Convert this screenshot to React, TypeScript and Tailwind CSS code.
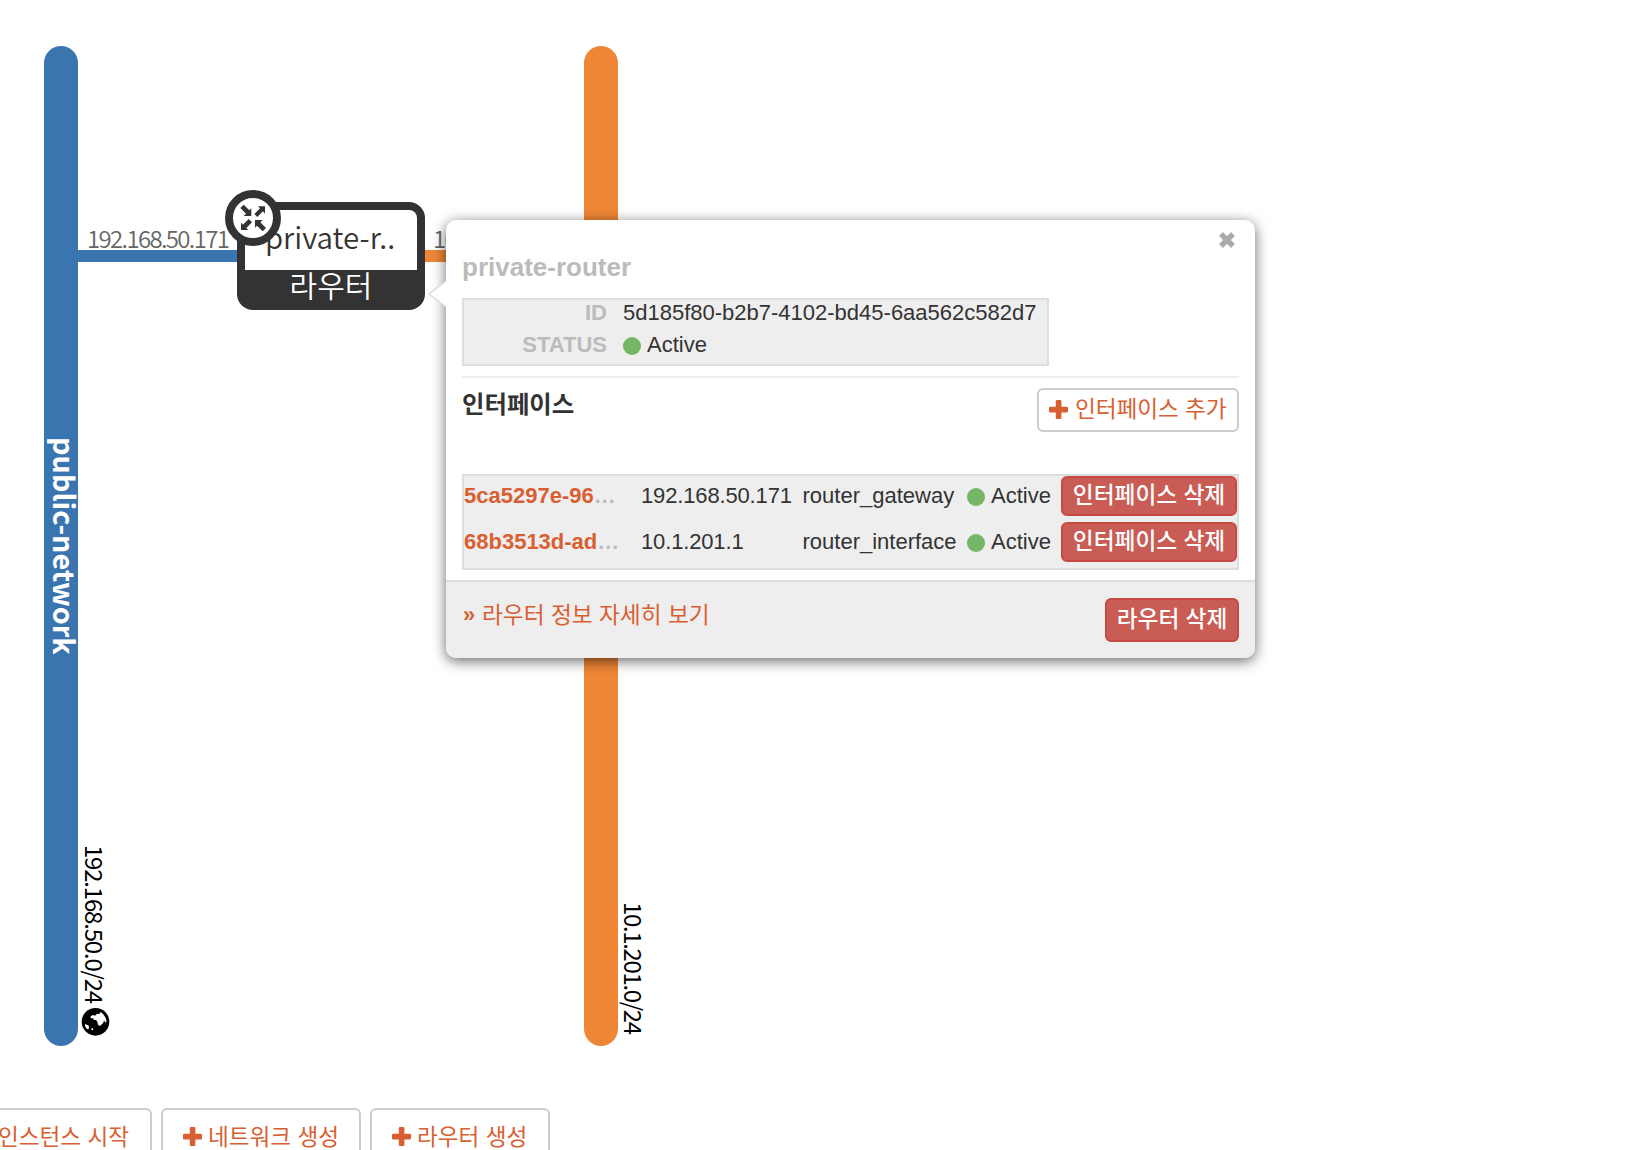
import type { ReactNode } from "react";

const PlusIcon = ({ className = "" }: { className?: string }) => (
  <svg viewBox="0 0 19 19" className={`h-[19px] w-[19px] shrink-0 ${className}`} fill="currentColor">
    <path d="M8 0h3.2a1.2 1.2 0 0 1 1.2 1.2v5.6h5.4A1.2 1.2 0 0 1 19 8v3.2a1.2 1.2 0 0 1-1.2 1.2h-5.4v5.4a1.2 1.2 0 0 1-1.2 1.2H8a1.2 1.2 0 0 1-1.2-1.2v-5.4H1.2A1.2 1.2 0 0 1 0 11.200V8a1.2 1.2 0 0 1 1.200-1.200h5.600V1.200A1.200 1.200 0 0 1 8 0z" />
  </svg>
);

const CloseIcon = () => (
  <svg viewBox="0 0 16 16" className="h-4 w-4" fill="none" stroke="#aaaaaa" strokeWidth="5.400">
    <path d="M2 2l12 12M14 2L2 14" />
  </svg>
);

const RouterIcon = () => (
  <svg viewBox="585 60 168 168" className="absolute left-[225px] top-[190px] h-14 w-14">
    <circle cx="669" cy="144" r="72" fill="#fff" stroke="#333" strokeWidth="24" />
    <g fill="#333">
      <path d="M631 114L641 104L658 121L664 115V138H641L648 131Z" />
      <path d="M705 109V131L699 124L682 141L673 132L690 115L684 109Z" />
      <path d="M633 180V158L639 164L656 147L666 157L649 174L655 180Z" />
      <path d="M675 150H698L691 157L708 174L698 184L681 167L675 173Z" />
    </g>
  </svg>
);

const GlobeIcon = () => (
  <svg viewBox="0 0 108 108" className="absolute left-[78px] top-[1004px] h-9 w-9">
    <circle cx="52.500" cy="53.500" r="41.500" fill="#000" />
    <path
      fill="#fff"
      d="M38 37L45 33L51 35L57 29L64 30L68 24L75 30L82 40L86 52L82 56L78 49L76 56L72 61L65 66L60 62L58 53L54 48L48 48L45 43L38 43ZM21 60L28 63L33 66L32 76L27 75L21 67ZM42 72L47 75L43 79L39 76Z"
    />
  </svg>
);

const Status = () => (
  <span className="flex items-center gap-[6px]">
    <i className="relative top-px h-[18px] w-[18px] shrink-0 rounded-full bg-[#74b566]" />
    Active
  </span>
);

const DangerButton = ({ children, className }: { children: ReactNode; className: string }) => (
  <button
    className={`flex shrink-0 items-center justify-center whitespace-nowrap rounded-[6px] border-2 border-[#c64a41] bg-[#c95c54] pb-[3px] text-[22.700px] font-medium text-white ${className}`}
  >
    {children}
  </button>
);

const interfaces = [
  { id: "5ca5297e-96", ip: "192.168.50.171", type: "router_gateway" },
  { id: "68b3513d-ad", ip: "10.1.201.1", type: "router_interface" },
];

const RouterPopup = () => (
  <section className="absolute left-[446px] top-[220px] flex h-[438px] w-[809px] flex-col rounded-[10px] bg-white text-[22px] leading-8 text-[#333] shadow-[0_3px_14px_rgba(0,0,0,0.6)]">
    <svg viewBox="0 0 19 28" className="absolute -left-[18px] top-[60px] h-7 w-[19px]">
      <path d="M19 0L1 14L19 28Z" fill="#fff" />
      <path d="M18 1L1 14L18 27" fill="none" stroke="#ddd" strokeWidth="1.500" />
    </svg>
    <div className="flex h-6 shrink-0 items-end justify-end px-5 pt-3">
      <span className="relative top-1">
        <CloseIcon />
      </span>
    </div>
    <div className="flex h-[336px] shrink-0 flex-col px-4">
      <h3 className="mt-[7px] h-[47px] text-[26px] font-bold leading-8 text-[#bbb]">private-router</h3>
      <dl className="grid h-[68px] w-[587px] grid-cols-[143px_1fr] content-start gap-x-4 border-2 border-[#ddd] bg-[#eee]">
        <dt className="h-8 text-right font-bold leading-[26px] text-[#bbb]">ID</dt>
        <dd className="h-8 whitespace-nowrap leading-[26px]">5d185f80-b2b7-4102-bd45-6aa562c582d7</dd>
        <dt className="text-right font-bold leading-[26px] text-[#bbb]">STATUS</dt>
        <dd className="leading-[26px]">
          <Status />
        </dd>
      </dl>
      <div className="mt-[10px] flex h-[98px] items-start justify-between border-t-2 border-[#eee]">
        <h4 className="mt-[11px] text-[24.400px] font-bold leading-8">인터페이스</h4>
        <button className="mt-[10px] flex h-11 w-[202px] items-center whitespace-nowrap rounded-[6px] border-2 border-[#ccc] bg-white pb-[2px] pl-[10px] text-[#d95f33]">
          <PlusIcon />
          <span className="ml-[7px] text-[22.700px] tracking-[-0.100px]">인터페이스 추가</span>
        </button>
      </div>
      <div className="flex h-24 flex-col gap-[6px] border-2 border-[#ddd] bg-[#eee]">
        {interfaces.map((row) => (
          <div key={row.id} className="flex h-10 items-center whitespace-nowrap">
            <span className="w-[177px] font-bold text-[#bbb]">
              <a className="text-[#d95f33]">{row.id}</a>…
            </span>
            <span className="w-[161.500px] tracking-[-0.150px]">{row.ip}</span>
            <span className="w-[164.500px]">{row.type}</span>
            <span className="w-[94px]">
              <Status />
            </span>
            <DangerButton className="h-10 w-[176px]">인터페이스 삭제</DangerButton>
          </div>
        ))}
      </div>
    </div>
    <footer className="flex h-[78px] shrink-0 items-start justify-between rounded-b-[10px] border-t-2 border-[#ddd] bg-[#eee] px-4 pt-4">
      <a className="mt-px flex whitespace-nowrap text-[#d95f33]">
        <span className="w-5 pl-px font-bold">»</span>
        <span className="text-[22.700px]">라우터 정보 자세히 보기</span>
      </a>
      <DangerButton className="h-11 w-[134px]">라우터 삭제</DangerButton>
    </footer>
  </section>
);

const ActionButton = ({ children, className }: { children: ReactNode; className: string }) => (
  <button
    className={`flex h-[59px] shrink-0 items-center whitespace-nowrap rounded-[6px] border-2 border-[#ccc] bg-white pl-5 text-[22.600px] text-[#d95f33] ${className}`}
  >
    <PlusIcon className="-mt-[2px]" />
    <span className="ml-1.5">{children}</span>
  </button>
);

export default function App() {
  return (
    <main className="relative flex h-[1150px] w-[1652px] flex-col overflow-hidden bg-white font-['Liberation_Sans','Noto_Sans_CJK_KR',sans-serif]">
      <div className="relative h-[1108px] shrink-0 font-['Noto_Sans_CJK_KR',sans-serif]">
        <div className="absolute left-[44px] top-[46px] h-[1000px] w-[34px] rounded-full bg-[#3b75af]" />
        <div className="absolute left-[584px] top-[46px] h-[1000px] w-[34px] rounded-full bg-[#ef8636]" />
        <div className="absolute left-[78px] top-[250px] h-3 w-[160px] bg-[#3b75af]" />
        <div className="absolute left-[424px] top-[250px] h-3 w-[160px] bg-[#ef8636]" />
        <span className="absolute left-[48px] top-[437px] w-[34px] whitespace-nowrap text-[28.800px] font-bold leading-[34px] text-white [writing-mode:vertical-rl]">
          public-network
        </span>
        <span className="absolute left-[78px] top-[845px] whitespace-nowrap text-[24px] leading-[34px] tracking-[-1.200px] text-black [writing-mode:vertical-rl]">
          192.168.50.0/24
        </span>
        <span className="absolute left-[617px] top-[902px] whitespace-nowrap text-[24px] leading-[34px] tracking-[-1.350px] text-black [writing-mode:vertical-rl]">
          10.1.201.0/24
        </span>
        <span className="absolute left-[87px] top-[222px] text-[24px] font-[350] leading-8 tracking-[-1.650px] text-[#666]">
          192.168.50.171
        </span>
        <span className="absolute left-[433px] top-[222px] text-[24px] font-[350] leading-8 tracking-[-1.650px] text-[#666]">
          10.1.201.1
        </span>
        <div className="absolute left-[237px] top-[202px] flex h-[108px] w-[188px] flex-col rounded-2xl bg-[#333] p-2 text-center">
          <div className="h-[60px] shrink-0 rounded-t-lg bg-white pr-[2px] text-[29.500px] font-[350] leading-[52px] text-[#333]">
            private-r..
          </div>
          <div className="h-8 text-[30px] font-[350] leading-[28px] text-white">라우터</div>
        </div>
        <RouterIcon />
        <GlobeIcon />
      </div>
      <nav className="-ml-[49px] flex gap-[9px]">
        <ActionButton className="w-[201px]">인스턴스 시작</ActionButton>
        <ActionButton className="w-[200px]">네트워크 생성</ActionButton>
        <ActionButton className="w-[180px]">라우터 생성</ActionButton>
      </nav>
      <RouterPopup />
    </main>
  );
}
